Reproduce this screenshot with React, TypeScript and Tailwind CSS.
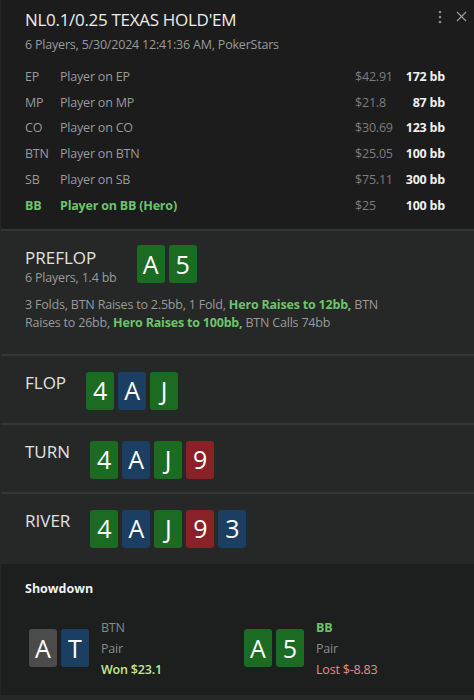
import React from "react";
import { X } from "lucide-react";

type Suit = "g" | "b" | "r" | "k";

const suitBg: Record<Suit, string> = {
	g: "bg-[#1c6b22]",
	b: "bg-[#1b3f62]",
	r: "bg-[#8a2126]",
	k: "bg-[#4b4b4b]",
};

function Card({ rank, suit }: { rank: string; suit: Suit }) {
	return (
		<div
			className={`w-[28px] h-[38px] rounded-[3px] flex items-center justify-center text-white text-[25px] leading-none ${suitBg[suit]}`}
		>
			{rank}
		</div>
	);
}

function Cards({ cards }: { cards: [string, Suit][] }) {
	return (
		<div className="flex gap-[4px]">
			{cards.map(([r, s], i) => (
				<Card key={i} rank={r} suit={s} />
			))}
		</div>
	);
}

const players = [
	{ pos: "EP", name: "Player on EP", money: "$42.91", bb: "172 bb" },
	{ pos: "MP", name: "Player on MP", money: "$21.8", bb: "87 bb" },
	{ pos: "CO", name: "Player on CO", money: "$30.69", bb: "123 bb" },
	{ pos: "BTN", name: "Player on BTN", money: "$25.05", bb: "100 bb" },
	{ pos: "SB", name: "Player on SB", money: "$75.11", bb: "300 bb" },
	{ pos: "BB", name: "Player on BB (Hero)", money: "$25", bb: "100 bb", hero: true },
];

function Street({ label, cards, last }: { label: string; cards: [string, Suit][]; last?: boolean }) {
	return (
		<div className={`flex items-start px-6 pt-4 ${last ? "h-[70px]" : "h-[69px] border-b-2 border-[#343735]"}`}>
			<div className="text-[17px] leading-[22px] text-[#e2e2e2] mr-5">{label}</div>
			<Cards cards={cards} />
		</div>
	);
}

export default function App() {
	return (
		<div
			className="w-[474px] h-[700px] overflow-hidden flex flex-col bg-[#1c1c1c] border-l border-[#262626]"
			style={{ fontFamily: "'Open Sans', 'Noto Sans', sans-serif" }}
		>
			<div className="pl-6 pr-[4px] pt-[7px] pb-[10px]">
				<div className="flex items-start">
					<h1 className="flex-1 text-[17px] text-[#ececec] tracking-[-0.3px]">NL0.1/0.25 TEXAS HOLD'EM</h1>
					<div className="flex items-center gap-[11px] pt-[1px] text-[#a0a0a0]">
						<svg width="4" height="14" viewBox="0 0 4 14" fill="#8c8c8c">
							<circle cx="2" cy="2" r="1.3" />
							<circle cx="2" cy="7" r="1.3" />
							<circle cx="2" cy="12" r="1.3" />
						</svg>
						<X size={17} strokeWidth={1.5} />
					</div>
				</div>
				<p className="text-[12.5px] text-[#9a9a9a] mt-[3px] tracking-[-0.2px]">
					6 Players, 5/30/2024 12:41:36 AM, PokerStars
				</p>
				<div className="mt-[10px] pr-[25px]">
					{players.map((p) => (
						<div key={p.pos} className="flex items-center h-[25.8px] text-[12.5px] tracking-[-0.2px]">
							<div className={`w-[35px] ${p.hero ? "text-[#6cc46a] font-bold" : "text-[#9a9a9a]"}`}>{p.pos}</div>
							<div className={`flex-1 ${p.hero ? "text-[#6cc46a] font-bold" : "text-[#9a9a9a]"}`}>{p.name}</div>
							<div className="w-[48px] text-[#7d7d7d]">{p.money}</div>
							<div className="w-[42px] text-right text-[#f0f0f0] font-bold">{p.bb}</div>
						</div>
					))}
				</div>
			</div>

			<div className="bg-[#252826] border-t-2 border-[#333634] flex flex-col">
				<div className="px-6 pt-[14px] pb-[22px] border-b-2 border-[#343735]">
					<div className="flex items-start">
						<div className="mr-5 pt-[2px]">
							<div className="text-[17px] text-[#e2e2e2] leading-[22px]">PREFLOP</div>
							<div className="text-[12.5px] text-[#9a9a9a] tracking-[-0.2px]">6 Players, 1.4 bb</div>
						</div>
						<Cards cards={[["A", "g"], ["5", "g"]]} />
					</div>
					<p className="mt-[8px] text-[12.5px] leading-[18px] text-[#9a9a9a] tracking-[-0.2px]">
						3 Folds, BTN Raises to 2.5bb, 1 Fold, <b className="font-bold text-[#6cc46a]">Hero Raises to 12bb,</b> BTN
						<br />
						Raises to 26bb, <b className="font-bold text-[#6cc46a]">Hero Raises to 100bb,</b> BTN Calls 74bb
					</p>
				</div>
				<Street label="FLOP" cards={[["4", "g"], ["A", "b"], ["J", "g"]]} />
				<Street label="TURN" cards={[["4", "g"], ["A", "b"], ["J", "g"], ["9", "r"]]} />
				<Street label="RIVER" cards={[["4", "g"], ["A", "b"], ["J", "g"], ["9", "r"], ["3", "b"]]} last />
			</div>

			<div className="bg-[#1d1f1e] flex-1 px-6 pt-4">
				<div className="text-[12.5px] font-bold text-[#f0f0f0]">Showdown</div>
				<div className="flex mt-[18px] pl-[4px]">
					<div className="flex items-center w-[215px]">
						<Cards cards={[["A", "k"], ["T", "b"]]} />
						<div className="ml-3 text-[12.5px] leading-[21px] tracking-[-0.2px]">
							<div className="text-[#8a8a8a]">BTN</div>
							<div className="text-[#8a8a8a]">Pair</div>
							<div className="text-[#c5e68f] font-semibold">Won $23.1</div>
						</div>
					</div>
					<div className="flex items-center">
						<Cards cards={[["A", "g"], ["5", "g"]]} />
						<div className="ml-3 text-[12.5px] leading-[21px] tracking-[-0.2px]">
							<div className="text-[#6cc46a] font-bold">BB</div>
							<div className="text-[#8a8a8a]">Pair</div>
							<div className="text-[#e58d8d]">Lost $-8.83</div>
						</div>
					</div>
				</div>
			</div>
			<div className="h-[5px] bg-[#252826]" />
		</div>
	);
}
